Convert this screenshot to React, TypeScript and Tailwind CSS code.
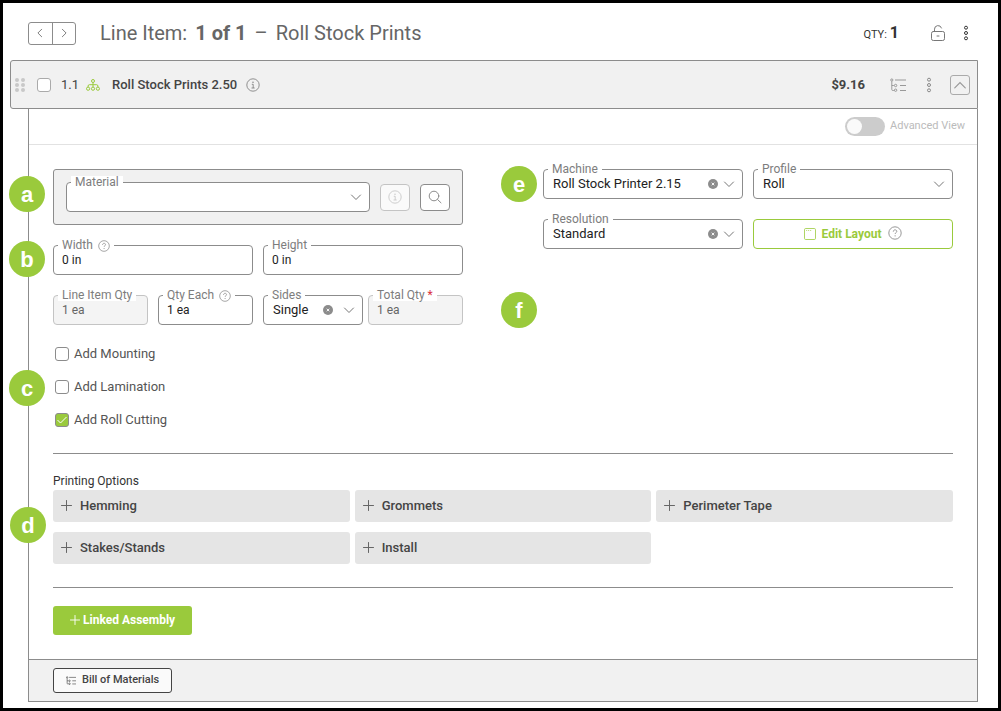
import { useState } from 'react'
import type { ReactNode } from 'react'

interface IconProps {
  className?: string
}

function ChevronIcon({ d, className }: IconProps & { d: string }) {
  return (
    <svg viewBox="0 0 12 12" className={className} fill="none" stroke="currentColor" strokeLinecap="round" aria-hidden>
      <path d={d} />
    </svg>
  )
}

const LEFT = 'M8 1.5 3.5 6 8 10.5'
const RIGHT = 'M4 1.5 8.5 6 4 10.5'
const DOWN = 'M1.5 4 6 8.5 10.5 4'
const UP = 'M1.5 8.5 6 4l4.5 4.5'

function InfoIcon({ className }: IconProps) {
  return (
    <svg viewBox="0 0 14 14" className={className} fill="none" stroke="currentColor" strokeWidth="0.8" aria-hidden>
      <circle cx="7" cy="7" r="6.2" />
      <path d="M5.8 6.3H7.2V10M5.5 10h3.2" />
      <circle cx="7" cy="4.2" r="0.7" fill="currentColor" stroke="none" />
    </svg>
  )
}

function HelpIcon({ className }: IconProps) {
  return (
    <svg viewBox="0 0 14 14" className={className} fill="none" stroke="currentColor" strokeWidth="0.9" aria-hidden>
      <circle cx="7" cy="7" r="6.2" />
      <path d="M5.3 5.6c0-2.4 3.5-2.2 3.5-.2 0 1.3-1.7 1.3-1.7 2.6" />
      <circle cx="7.1" cy="9.8" r="0.6" fill="currentColor" stroke="none" />
    </svg>
  )
}

function SearchIcon({ className }: IconProps) {
  return (
    <svg viewBox="0 0 14 14" className={className} fill="none" stroke="currentColor" strokeLinecap="round" aria-hidden>
      <circle cx="6" cy="6" r="4.8" />
      <path d="m9.6 9.6 3.4 3.2" />
    </svg>
  )
}

function UnlockIcon({ className }: IconProps) {
  return (
    <svg viewBox="0 0 14 16" className={className} fill="none" stroke="currentColor" strokeLinecap="round" aria-hidden>
      <rect x="0.5" y="6.5" width="13" height="9" rx="1.8" />
      <path d="M3.5 6.3V4.2a3.6 3.6 0 0 1 7-1.2M6 11h2" />
    </svg>
  )
}

function MoreIcon({ className }: IconProps) {
  return (
    <svg viewBox="0 0 6 16" className={className} fill="none" stroke="currentColor" aria-hidden>
      <circle cx="3" cy="2.7" r="1.5" />
      <circle cx="3" cy="8" r="1.5" />
      <circle cx="3" cy="13.3" r="1.5" />
    </svg>
  )
}

function TreeListIcon({ className }: IconProps) {
  return (
    <svg viewBox="0 0 16 14" className={className} fill="none" stroke="currentColor" aria-hidden>
      <circle cx="1.8" cy="2" r="1.1" />
      <path d="M5 2h11M10 7.5h6M10 12.5h6M1.8 3.2v8.3q0 1 1 1h1M1.8 7.5h2" />
      <circle cx="5.6" cy="7.5" r="1.2" />
      <circle cx="5.6" cy="12.2" r="1.2" />
    </svg>
  )
}

function SitemapIcon({ className }: IconProps) {
  return (
    <svg viewBox="0 0 14 12" className={className} fill="none" stroke="currentColor" aria-hidden>
      <circle cx="7" cy="2" r="1.5" />
      <circle cx="2.1" cy="9.7" r="1.6" />
      <circle cx="7" cy="9.7" r="1.6" />
      <circle cx="11.9" cy="9.7" r="1.6" />
      <path d="M7 3.5V8M2.1 8V7Q2.1 5.7 3.4 5.7h7.2q1.3 0 1.3 1.3v1" />
    </svg>
  )
}

function DragIcon({ className }: IconProps) {
  return (
    <svg viewBox="0 0 10 14" className={className} fill="currentColor" aria-hidden>
      {[2, 7, 12].map((y) => (
        <g key={y}>
          <circle cx="2" cy={y} r="2" />
          <circle cx="8" cy={y} r="2" />
        </g>
      ))}
    </svg>
  )
}

function WindowIcon({ className }: IconProps) {
  return (
    <svg viewBox="0 0 12 12" className={className} fill="none" stroke="currentColor" aria-hidden>
      <rect x="0.5" y="0.5" width="11" height="11" rx="1.2" strokeWidth="0.8" />
      <path d="M2 2.5h6" strokeWidth="0.6" strokeDasharray="1.2 0.8" />
    </svg>
  )
}

function PlusIcon({ className }: IconProps) {
  return (
    <svg viewBox="0 0 11 11" className={className} fill="none" stroke="currentColor" strokeLinecap="round" aria-hidden>
      <path d="M5.5 0.5v10M0.5 5.5h10" />
    </svg>
  )
}

function ClearIcon({ className }: IconProps) {
  return (
    <svg viewBox="0 0 10 10" className={className} aria-hidden>
      <circle cx="5" cy="5" r="5" fill="currentColor" />
      <path d="m3.7 3.7 2.6 2.6m0-2.6L3.7 6.3" stroke="white" strokeWidth="0.9" />
    </svg>
  )
}

function Badge({ letter, className }: { letter: string; className: string }) {
  return (
    <span
      className={`absolute z-10 flex size-9 items-center justify-center rounded-full bg-[#9aca3c] pt-[2px] font-['Liberation_Sans',sans-serif] text-[22px] font-bold leading-none text-white ${className}`}
    >
      {letter}
    </span>
  )
}

interface FieldProps {
  id: string
  label: string
  help?: boolean
  required?: boolean
  disabled?: boolean
  children: ReactNode
}

function Field({ id, label, help, required, disabled, children }: FieldProps) {
  return (
    <div
      className={`relative flex h-[30px] min-w-0 flex-1 items-center rounded border ${
        disabled ? 'border-[#c4c4c4] bg-[#f4f4f4]' : 'border-[#8c8c8c] bg-white'
      }`}
    >
      <label
        htmlFor={id}
        className="absolute -top-[7px] left-1 flex h-3 items-center gap-[5px] whitespace-nowrap bg-white px-1 text-xs leading-3 text-[#7d7d7d]"
      >
        <span>
          {label}
          {required && <span className="text-[#d9303e]"> *</span>}
        </span>
        {help && <HelpIcon className="mt-[2px] size-3 text-[#8c8c8c]" />}
      </label>
      {children}
    </div>
  )
}

function TextField({ value, ...field }: Omit<FieldProps, 'children'> & { value: string }) {
  return (
    <Field {...field}>
      <input
        id={field.id}
        type="text"
        defaultValue={value}
        disabled={field.disabled}
        className="w-full min-w-0 bg-transparent px-2 text-xs text-[#222] outline-none disabled:text-[#666]"
      />
    </Field>
  )
}

interface SelectFieldProps {
  id: string
  label: string
  options: string[]
  clearable?: boolean
  narrow?: boolean
}

function SelectField({ id, label, options, clearable, narrow }: SelectFieldProps) {
  const [value, setValue] = useState(options[0])
  return (
    <Field id={id} label={label}>
      <select
        id={id}
        value={value}
        onChange={(e) => setValue(e.target.value)}
        className="h-full w-full min-w-0 cursor-pointer appearance-none bg-transparent pl-[9px] pr-6 text-[13px] text-[#222] outline-none"
      >
        {options.map((o) => (
          <option key={o} value={o}>
            {o}
          </option>
        ))}
      </select>
      {clearable && (
        <button
          type="button"
          aria-label={`Clear ${label}`}
          className={`absolute text-[#8c8c8c] ${narrow ? 'right-[29px]' : 'right-6'}`}
        >
          <ClearIcon className="size-[10px]" />
        </button>
      )}
      <ChevronIcon d={DOWN} className="pointer-events-none absolute right-[7px] size-3 text-[#777]" />
    </Field>
  )
}

function Checkbox({ label, checked }: { label: string; checked?: boolean }) {
  return (
    <label className="flex h-[33px] items-center gap-[5px] text-[13px] text-[#555]">
      <span className="relative flex size-[14px]">
        <input
          type="checkbox"
          defaultChecked={checked}
          className="peer size-[14px] appearance-none rounded-[3px] border border-[#8c8c8c] bg-white checked:bg-[#9aca3c]"
        />
        <svg
          viewBox="0 0 14 14"
          className="pointer-events-none absolute inset-0 hidden size-[14px] text-white peer-checked:block"
          fill="none"
          stroke="currentColor"
          aria-hidden
        >
          <path d="m2.5 7 3 3 6-6" />
        </svg>
      </span>
      {label}
    </label>
  )
}

const PRINTING_OPTIONS = ['Hemming', 'Grommets', 'Perimeter Tape', 'Stakes/Stands', 'Install']

function PageHeader() {
  return (
    <header className="flex h-[57px] items-center pl-[25px] pr-[29px] pt-[3px] text-[#666]">
      <div className="flex h-[23px] w-12 divide-x divide-[#8c8c8c] rounded-[3px] border border-[#8c8c8c]">
        <button type="button" aria-label="Previous" className="flex flex-1 items-center justify-center">
          <ChevronIcon d={LEFT} className="size-[10px]" />
        </button>
        <button type="button" aria-label="Next" className="flex flex-1 items-center justify-center">
          <ChevronIcon d={RIGHT} className="size-[10px]" />
        </button>
      </div>
      <h1 className="ml-6 flex gap-2 text-xl leading-6">
        <span>Line Item:</span>
        <strong className="font-bold">1 of 1</strong>
        <span>–</span>
        <span>Roll Stock Prints</span>
      </h1>
      <div className="ml-auto flex items-center text-[#333]">
        <span className="flex items-baseline gap-[3px] text-[11px]">
          QTY: <strong className="text-base font-bold leading-5">1</strong>
        </span>
        <button type="button" aria-label="Unlock" className="ml-8 text-[#777]">
          <UnlockIcon className="h-4 w-[14px]" />
        </button>
        <button type="button" aria-label="More actions" className="ml-[18px]">
          <MoreIcon className="h-4 w-[6px]" />
        </button>
      </div>
    </header>
  )
}

function LineItemBar() {
  return (
    <div className="ml-[7px] flex h-[49px] items-center rounded-l-[3px] border border-[#8c8c8c] bg-[#f1f1f1] pl-1 pr-[7px] text-[13px] text-[#444]">
      <DragIcon className="h-[14px] w-[10px] text-[#c8c8c8]" />
      <input
        type="checkbox"
        aria-label="Select line item"
        className="ml-3 size-[14px] appearance-none rounded-[3px] border border-[#aaa] bg-white"
      />
      <span className="ml-[10px]">1.1</span>
      <SitemapIcon className="ml-[7px] h-3 w-[14px] text-[#9aca3c]" />
      <span className="ml-3 font-medium">Roll Stock Prints 2.50</span>
      <InfoIcon className="ml-[9px] size-[14px] text-[#777]" />
      <span className="ml-auto font-bold">$9.16</span>
      <button type="button" aria-label="Components" className="ml-[25px] text-[#999]">
        <TreeListIcon className="h-[14px] w-4" />
      </button>
      <button type="button" aria-label="Line item actions" className="ml-5 text-[#888]">
        <MoreIcon className="h-4 w-[6px]" />
      </button>
      <button
        type="button"
        aria-label="Collapse"
        className="ml-[18px] flex size-5 items-center justify-center rounded-[3px] border border-[#aaa] text-[#999]"
      >
        <ChevronIcon d={UP} className="size-[14px]" />
      </button>
    </div>
  )
}

function MaterialSection() {
  return (
    <section className="min-w-0">
      <div className="relative">
        <Badge letter="a" className="-left-11 top-[7px]" />
        <div className="flex h-14 items-center gap-[10px] rounded-[3px] border border-[#8c8c8c] bg-[#f1f1f1] px-3">
          <SelectField id="material" label="Material" options={['']} />
          <button
            type="button"
            aria-label="Material info"
            disabled
            className="flex h-[27px] w-[30px] items-center justify-center rounded border border-[#c4c4c4] bg-[#fafafa] text-[#c4c4c4]"
          >
            <InfoIcon className="size-[14px]" />
          </button>
          <button
            type="button"
            aria-label="Search materials"
            className="flex h-[27px] w-[30px] items-center justify-center rounded border border-[#8c8c8c] bg-white text-[#8c8c8c]"
          >
            <SearchIcon className="size-[14px]" />
          </button>
        </div>
      </div>

      <div className="relative mt-5 grid grid-cols-2 gap-x-[10px] gap-y-5">
        <Badge letter="b" className="-left-11 -top-1" />
        <TextField id="width" label="Width" value="0 in" help />
        <TextField id="height" label="Height" value="0 in" />
        <div className="grid grid-cols-2 gap-[10px]">
          <TextField id="line-item-qty" label="Line Item Qty" value="1 ea" disabled />
          <TextField id="qty-each" label="Qty Each" value="1 ea" help />
        </div>
        <div className="grid grid-cols-[20fr_19fr] gap-[5px]">
          <SelectField id="sides" label="Sides" options={['Single', 'Double']} clearable narrow />
          <TextField id="total-qty" label="Total Qty" value="1 ea" required disabled />
        </div>
      </div>

      <div className="relative mt-3 pl-[2px]">
        <Badge letter="c" className="-left-11 top-[33px]" />
        <Checkbox label="Add Mounting" />
        <Checkbox label="Add Lamination" />
        <Checkbox label="Add Roll Cutting" checked />
      </div>
    </section>
  )
}

function MachineSection() {
  return (
    <section className="relative min-w-0">
      <Badge letter="e" className="-left-[42px] -top-[3px]" />
      <Badge letter="f" className="-left-[42px] top-[123px]" />
      <div className="grid grid-cols-2 gap-x-[10px] gap-y-5">
        <SelectField id="machine" label="Machine" options={['Roll Stock Printer 2.15']} clearable />
        <SelectField id="profile" label="Profile" options={['Roll']} />
        <SelectField id="resolution" label="Resolution" options={['Standard', 'High']} clearable />
        <button
          type="button"
          className="flex h-[30px] items-center justify-center rounded border border-[#9aca3c] bg-white text-xs font-bold text-[#9aca3c]"
        >
          <WindowIcon className="size-3" />
          <span className="ml-[6px]">Edit Layout</span>
          <HelpIcon className="mb-[3px] ml-[7px] size-[14px] text-[#8c8c8c]" />
        </button>
      </div>
    </section>
  )
}

export default function App() {
  return (
    <div className="min-h-screen border-[3px] border-black bg-white pb-[6px] font-[Roboto,sans-serif]">
      <PageHeader />
      <main className="mr-5">
        <LineItemBar />
        <div className="ml-[25px] border-x border-b border-[#8c8c8c]">
          <div className="flex h-9 items-center justify-end gap-[5px] border-b border-[#e2e2e2] pr-3">
            <input
              id="advanced-view"
              type="checkbox"
              role="switch"
              className="h-[19px] w-10 appearance-none rounded-full bg-[#ccc] before:m-[2px] before:block before:size-[15px] before:rounded-full before:bg-[#fafafa] checked:bg-[#9aca3c] checked:before:ml-[23px]"
            />
            <label htmlFor="advanced-view" className="text-[11px] text-[#bbb]">
              Advanced View
            </label>
          </div>

          <div className="px-6 py-6">
            <div className="grid grid-cols-2 gap-20">
              <MaterialSection />
              <MachineSection />
            </div>

            <hr className="mt-[17px] border-[#8c8c8c]" />

            <section className="relative mt-[18px]">
              <Badge letter="d" className="-left-[43px] top-[35px]" />
              <h2 className="text-xs leading-[18px] text-[#333]">Printing Options</h2>
              <div className="grid grid-cols-3 gap-x-[5px] gap-y-[10px]">
                {PRINTING_OPTIONS.map((name) => (
                  <button
                    key={name}
                    type="button"
                    className="flex h-8 items-center gap-2 rounded-[3px] bg-[#e5e5e5] px-2 text-[13px] font-medium text-[#444]"
                  >
                    <PlusIcon className="mb-px size-[11px] text-[#666]" />
                    {name}
                  </button>
                ))}
              </div>
            </section>

            <hr className="mt-[23px] border-[#8c8c8c]" />

            <button
              type="button"
              className="mt-[18px] flex h-[29px] items-center gap-[3px] rounded-[3px] bg-[#9aca3c] px-[17px] pb-px text-xs font-bold text-white"
            >
              <PlusIcon className="size-[10px]" />
              Linked Assembly
            </button>
          </div>

          <footer className="flex border-t border-[#8c8c8c] bg-[#f1f1f1] px-6 py-2">
            <button
              type="button"
              className="flex h-[25px] items-center gap-[6px] rounded-[3px] border border-[#444] bg-[#fafafa] px-3 text-[11px] font-medium text-[#444]"
            >
              <TreeListIcon className="h-[9px] w-[10px]" />
              Bill of Materials
            </button>
          </footer>
        </div>
      </main>
    </div>
  )
}
